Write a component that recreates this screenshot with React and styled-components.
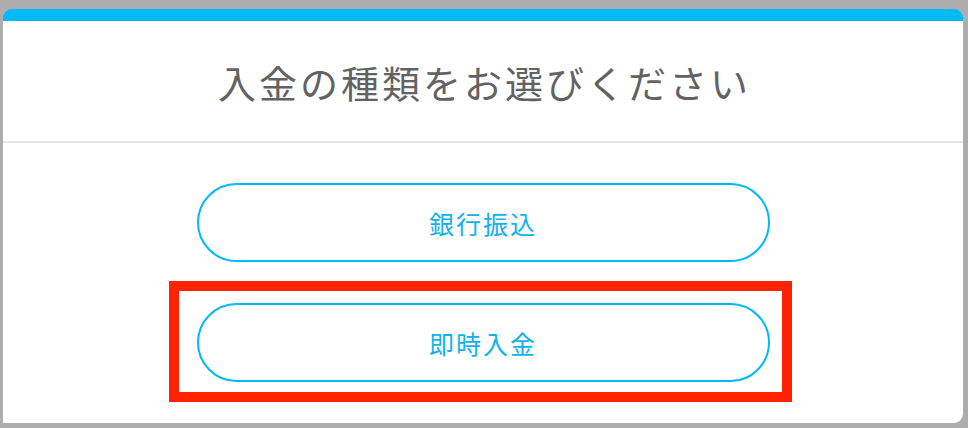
import React from 'react';
import styled, { createGlobalStyle } from 'styled-components';

const GlobalStyle = createGlobalStyle`
  html, body {
    margin: 0;
    padding: 0;
    background: #adadad;
    font-family: "Noto Sans CJK JP", "Noto Sans", sans-serif;
  }
`;

const Overlay = styled.div`
  width: 968px;
  height: 428px;
  box-sizing: border-box;
  padding: 9px 5px 5px 3px;
  background: #adadad;
`;

const Modal = styled.div`
  height: 100%;
  background: #fff;
  border-top: 12px solid #00b9f8;
  border-radius: 9px 9px 9px 0;
  box-sizing: border-box;
  display: flex;
  flex-direction: column;
`;

const Header = styled.div`
  height: 120px;
  border-bottom: 2px solid #e6e6e6;
  display: flex;
  align-items: center;
  justify-content: center;
  flex-shrink: 0;
`;

const Title = styled.h2`
  margin: 0;
  font-size: 38px;
  font-weight: 400;
  color: #626262;
  letter-spacing: 3px;
  margin-right: -3px;
`;

const Body = styled.div`
  display: flex;
  flex-direction: column;
  align-items: center;
  gap: 41px;
  padding-top: 40px;
`;

const Highlight = styled.div`
  position: relative;

  &::after {
    content: '';
    position: absolute;
    top: -22px;
    right: -22px;
    bottom: -20px;
    left: -28px;
    border: 10px solid #ff2200;
    pointer-events: none;
  }
`;

const ChoiceButton = styled.button`
  width: 573px;
  height: 79px;
  border: 2px solid #00b9f8;
  border-radius: 40px;
  background: #fff;
  color: #12b1ee;
  font-family: inherit;
  font-size: 25px;
  font-weight: 400;
  letter-spacing: 2px;
  cursor: pointer;
  display: flex;
  align-items: center;
  justify-content: center;
`;

const App = () => {
  return (
    <>
      <GlobalStyle />
      <Overlay>
        <Modal>
          <Header>
            <Title>入金の種類をお選びください</Title>
          </Header>
          <Body>
            <ChoiceButton>銀行振込</ChoiceButton>
            <Highlight>
              <ChoiceButton>即時入金</ChoiceButton>
            </Highlight>
          </Body>
        </Modal>
      </Overlay>
    </>
  );
};

export default App;
